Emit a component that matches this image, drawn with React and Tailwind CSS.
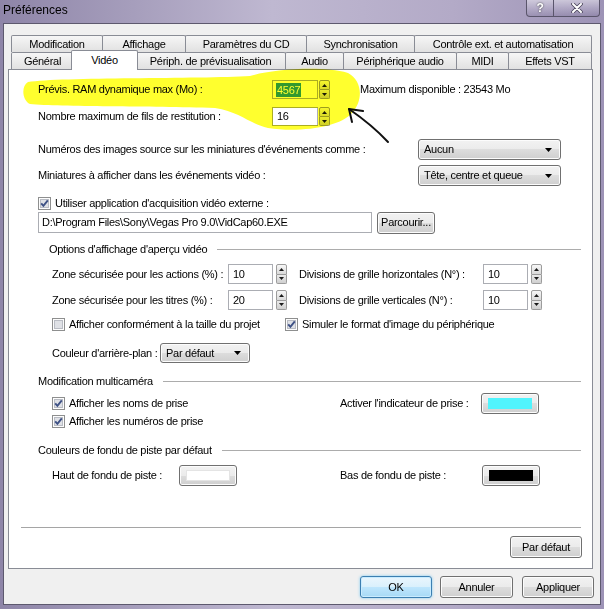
import React from 'react';

const BTN =
  'border border-[#707070] rounded-[3px] bg-[linear-gradient(#f2f2f2,#ebebeb_50%,#dddddd_50%,#cfcfcf)] shadow-[inset_0_0_0_1px_#fcfcfc]';

const TAB =
  'h-[17px] flex items-center justify-center border border-b-0 border-[#898c95] rounded-t-[2px] bg-linear-to-b from-[#f6f6f6] to-[#e1e1e1] whitespace-nowrap';

const backRow = [
  ['Modification', 'w-[92px]'],
  ['Affichage', '-ml-px w-[84px]'],
  ['Paramètres du CD', '-ml-px w-[122px]'],
  ['Synchronisation', '-ml-px w-[109px]'],
  ['Contrôle ext. et automatisation', '-ml-px w-[178px]'],
];

function Spin({ className = '' }) {
  return (
    <div className={`flex flex-col w-[11px] ${className}`}>
      <div className="flex-1 flex items-center justify-center border border-[#9c9c9c] rounded-t-[2px] bg-linear-to-b from-[#f7f7f7] to-[#dadada]">
        <svg width="5" height="3" viewBox="0 0 5 3">
          <path d="M0 3L2.5 0L5 3Z" fill="#1a1a1a" />
        </svg>
      </div>
      <div className="flex-1 flex items-center justify-center border border-t-0 border-[#9c9c9c] rounded-b-[2px] bg-linear-to-b from-[#ebebeb] to-[#cfcfcf]">
        <svg width="5" height="3" viewBox="0 0 5 3">
          <path d="M0 0H5L2.5 3Z" fill="#1a1a1a" />
        </svg>
      </div>
    </div>
  );
}

function NumField({ value, className = '', selected }) {
  return (
    <div className={`flex items-center border border-[#abadb3] bg-white pl-[3px] ${className}`}>
      {selected ? (
        <span className="bg-[#3399ff] text-white px-px leading-[14px]">{value}</span>
      ) : (
        <span className="pl-px">{value}</span>
      )}
    </div>
  );
}

function Combo({ label, className = '' }) {
  return (
    <div className={`flex items-center justify-between pl-[5px] pr-[8px] ${BTN} ${className}`}>
      <span>{label}</span>
      <svg width="7" height="4" viewBox="0 0 7 4">
        <path d="M0 0H7L3.5 4Z" fill="#000" />
      </svg>
    </div>
  );
}

function Check({ on }) {
  return (
    <svg width="13" height="13" viewBox="0 0 13 13" className="shrink-0">
      <rect x="0.5" y="0.5" width="12" height="12" fill="#fdfdfd" stroke="#8e8f8f" />
      <rect x="2" y="2" width="9" height="9" fill="#dfe1e6" />
      <rect x="2.5" y="2.5" width="8" height="8" fill="none" stroke="#b9bcc4" />
      {on && <path d="M3.2 6.3L5.4 8.8L9.8 3.3" fill="none" stroke="#3e5185" strokeWidth="1.9" />}
    </svg>
  );
}

function CheckLine({ on, label, className = '' }) {
  return (
    <div className={`flex items-center gap-[4px] h-[14px] ${className}`}>
      <Check on={on} />
      <span>{label}</span>
    </div>
  );
}

function ColorBtn({ swatch }) {
  return (
    <div className={`w-[58px] h-[21px] shrink-0 px-[6px] py-[4px] ${BTN}`}>
      <div className={`h-full ${swatch}`} />
    </div>
  );
}

function Group({ label, className = '' }) {
  return (
    <div className={`flex items-center h-[13px] ${className}`}>
      <span>{label}</span>
      <div className="flex-1 h-px bg-[#acacac] ml-[10px] mr-[11px]" />
    </div>
  );
}

function Button({ label, className = '' }) {
  return (
    <div className={`h-[22px] flex items-center justify-center ${BTN} ${className}`}>{label}</div>
  );
}

export default function App() {
  return (
    <div className="relative w-[604px] h-[609px] overflow-hidden bg-[linear-gradient(90deg,#8e85a8,#bfb8d1_45%,#b3aac7_75%,#9d93b6)] text-[11px] tracking-[-0.28px] leading-[13px] text-black font-['Liberation_Sans',Arial,sans-serif]">
      {/* title bar */}
      <div className="h-[23px] flex">
        <div className="pl-[3px] pt-[4px] text-[12px] tracking-normal">Préférences</div>
        <div className="ml-auto mr-[4px] flex h-[17px]">
          <div className="w-[28px] flex items-center justify-center border border-t-0 border-[#5a556b] rounded-bl-[4px] bg-[linear-gradient(rgba(255,255,255,0.45),rgba(255,255,255,0.15)_50%,rgba(80,70,110,0.15))] text-white font-bold text-[12px] [text-shadow:0_0_2px_#333]">
            ?
          </div>
          <div className="w-[46px] flex items-center justify-center border border-l-0 border-t-0 border-[#5a556b] rounded-br-[4px] bg-[linear-gradient(rgba(255,255,255,0.45),rgba(255,255,255,0.15)_50%,rgba(80,70,110,0.15))]">
            <svg width="12" height="10" viewBox="0 0 12 10">
              <path d="M2 1L10 9M10 1L2 9" stroke="#4a455a" strokeWidth="3.6" strokeLinecap="round" />
              <path d="M2 1L10 9M10 1L2 9" stroke="#ffffff" strokeWidth="2" strokeLinecap="round" />
            </svg>
          </div>
        </div>
      </div>

      {/* client area */}
      <div className="ml-[3px] w-[598px] h-[582px] border border-[#5d596e] bg-[#f0f0f0] flex flex-col">
        <div className="pt-[11px] pl-[7px]">
          <div className="flex h-[17px]">
            {backRow.map(([label, cls]) => (
              <div key={label} className={`${TAB} ${cls}`}>
                {label}
              </div>
            ))}
          </div>
          <div className="flex items-end h-[17px]">
            <div className={`${TAB} w-[63px]`}>Général</div>
            <div className="relative z-10 -ml-[3px] -mb-px w-[67px] h-[20px] flex justify-center pt-[3px] border border-b-0 border-[#898c95] rounded-t-[2px] bg-white">
              Vidéo
            </div>
            <div className={`${TAB} -ml-[3px] w-[151px]`}>Périph. de prévisualisation</div>
            <div className={`${TAB} -ml-px w-[59px]`}>Audio</div>
            <div className={`${TAB} -ml-px w-[114px]`}>Périphérique audio</div>
            <div className={`${TAB} -ml-px w-[53px]`}>MIDI</div>
            <div className={`${TAB} -ml-px w-[84px]`}>Effets VST</div>
          </div>
        </div>

        {/* tab page */}
        <div className="ml-[4px] w-[585px] h-[500px] border border-[#898c95] bg-white flex flex-col">
          <div className="pl-[29px]">
            <div className="flex items-center h-[19px] mt-[10px]">
              <span className="w-[234px]">Prévis. RAM dynamique max (Mo) :</span>
              <NumField value="4567" selected className="w-[46px] h-[19px]" />
              <Spin className="h-[19px] ml-px" />
              <span className="ml-[30px]">Maximum disponible : 23543 Mo</span>
            </div>
            <div className="flex items-center h-[19px] mt-[8px]">
              <span className="w-[234px]">Nombre maximum de fils de restitution :</span>
              <NumField value="16" className="w-[46px] h-[19px]" />
              <Spin className="h-[19px] ml-px" />
            </div>
            <div className="flex items-center h-[21px] mt-[13px]">
              <span className="w-[380px]">Numéros des images source sur les miniatures d'événements comme :</span>
              <Combo label="Aucun" className="w-[143px] h-[21px]" />
            </div>
            <div className="flex items-center h-[21px] mt-[5px]">
              <span className="w-[380px]">Miniatures à afficher dans les événements vidéo :</span>
              <Combo label="Tête, centre et queue" className="w-[143px] h-[21px]" />
            </div>
            <CheckLine on label="Utiliser application d'acquisition vidéo externe :" className="mt-[10px]" />
            <div className="flex items-center h-[21px] mt-[2px]">
              <div className="w-[334px] h-[21px] flex items-center pl-[3px] border border-[#abadb3] bg-white">
                D:\Program Files\Sony\Vegas Pro 9.0\VidCap60.EXE
              </div>
              <Button label="Parcourir..." className="ml-[5px] w-[58px] h-[21px]" />
            </div>

            <Group label="Options d'affichage d'aperçu vidéo" className="mt-[10px] ml-[11px]" />
            <div className="flex items-center h-[20px] mt-[8px] ml-[14px]">
              <span className="w-[176px]">Zone sécurisée pour les actions (%) :</span>
              <NumField value="10" className="w-[45px] h-[20px]" />
              <Spin className="h-[20px] ml-[3px]" />
              <span className="ml-[12px] w-[184px]">Divisions de grille horizontales (N°) :</span>
              <NumField value="10" className="w-[45px] h-[20px]" />
              <Spin className="h-[20px] ml-[3px]" />
            </div>
            <div className="flex items-center h-[20px] mt-[6px] ml-[14px]">
              <span className="w-[176px]">Zone sécurisée pour les titres (%) :</span>
              <NumField value="20" className="w-[45px] h-[20px]" />
              <Spin className="h-[20px] ml-[3px]" />
              <span className="ml-[12px] w-[184px]">Divisions de grille verticales (N°) :</span>
              <NumField value="10" className="w-[45px] h-[20px]" />
              <Spin className="h-[20px] ml-[3px]" />
            </div>
            <div className="flex items-center mt-[7px] ml-[14px]">
              <CheckLine label="Afficher conformément à la taille du projet" className="w-[233px]" />
              <CheckLine on label="Simuler le format d'image du périphérique" />
            </div>
            <div className="flex items-center h-[20px] mt-[12px] ml-[14px]">
              <span className="w-[108px]">Couleur d'arrière-plan :</span>
              <Combo label="Par défaut" className="w-[90px] h-[20px]" />
            </div>

            <Group label="Modification multicaméra" className="mt-[12px]" />
            <div className="flex mt-[5px]">
              <div className="w-[302px] pl-[14px] pt-[3px] flex flex-col gap-[4px]">
                <CheckLine on label="Afficher les noms de prise" />
                <CheckLine on label="Afficher les numéros de prise" />
              </div>
              <div className="flex items-center h-[21px]">
                <span className="w-[141px]">Activer l'indicateur de prise :</span>
                <ColorBtn swatch="bg-[#50f4fd]" />
              </div>
            </div>

            <Group label="Couleurs de fondu de piste par défaut" className="mt-[16px]" />
            <div className="flex items-center h-[22px] mt-[7px] ml-[14px]">
              <span className="w-[127px]">Haut de fondu de piste :</span>
              <ColorBtn swatch="bg-white border border-[#e4e4e4]" />
              <span className="ml-[103px] w-[142px]">Bas de fondu de piste :</span>
              <ColorBtn swatch="bg-black" />
            </div>
          </div>

          <div className="mt-auto pb-[10px] flex flex-col">
            <div className="h-px bg-[#a5a5a5] ml-[12px] mr-[11px]" />
            <Button label="Par défaut" className="self-end mt-[8px] mr-[10px] w-[72px] h-[21px]" />
          </div>
        </div>

        <div className="flex justify-end mt-[7px] pr-[6px]">
          <div className="w-[72px] h-[22px] flex items-center justify-center rounded-[3px] border border-[#3c7fb1] bg-[linear-gradient(#eaf6fd,#d9f0fc_50%,#bee6fd_50%,#a7d9f5)] shadow-[inset_0_0_0_1px_#c9ecff,0_0_3px_#7ec8f0]">
            OK
          </div>
          <Button label="Annuler" className="ml-[8px] w-[73px]" />
          <Button label="Appliquer" className="ml-[9px] w-[72px]" />
        </div>
      </div>

      {/* highlighter stroke and arrow drawn over the dialog */}
      <svg className="absolute inset-0 pointer-events-none mix-blend-multiply" width="604" height="609" viewBox="0 0 604 609">
        <path
          fillRule="evenodd"
          fill="#ffff2e"
          d="M28 82C60 77 200 79 250 76C270 70 320 65 348 73C362 80 364 100 352 113C340 127 300 133 268 128C250 124 240 112 215 108C150 106 60 107 30 104C22 100 21 86 28 82ZM273 108H318V125H273Z"
        />
      </svg>
      <svg className="absolute inset-0 pointer-events-none" width="604" height="609" viewBox="0 0 604 609">
        <path d="M388 142C375 128 362 118 349 109" fill="none" stroke="#111" strokeWidth="2" strokeLinecap="round" />
        <path d="M352 122L349 109L363 111" fill="none" stroke="#111" strokeWidth="2" strokeLinecap="round" strokeLinejoin="round" />
      </svg>
    </div>
  );
}
